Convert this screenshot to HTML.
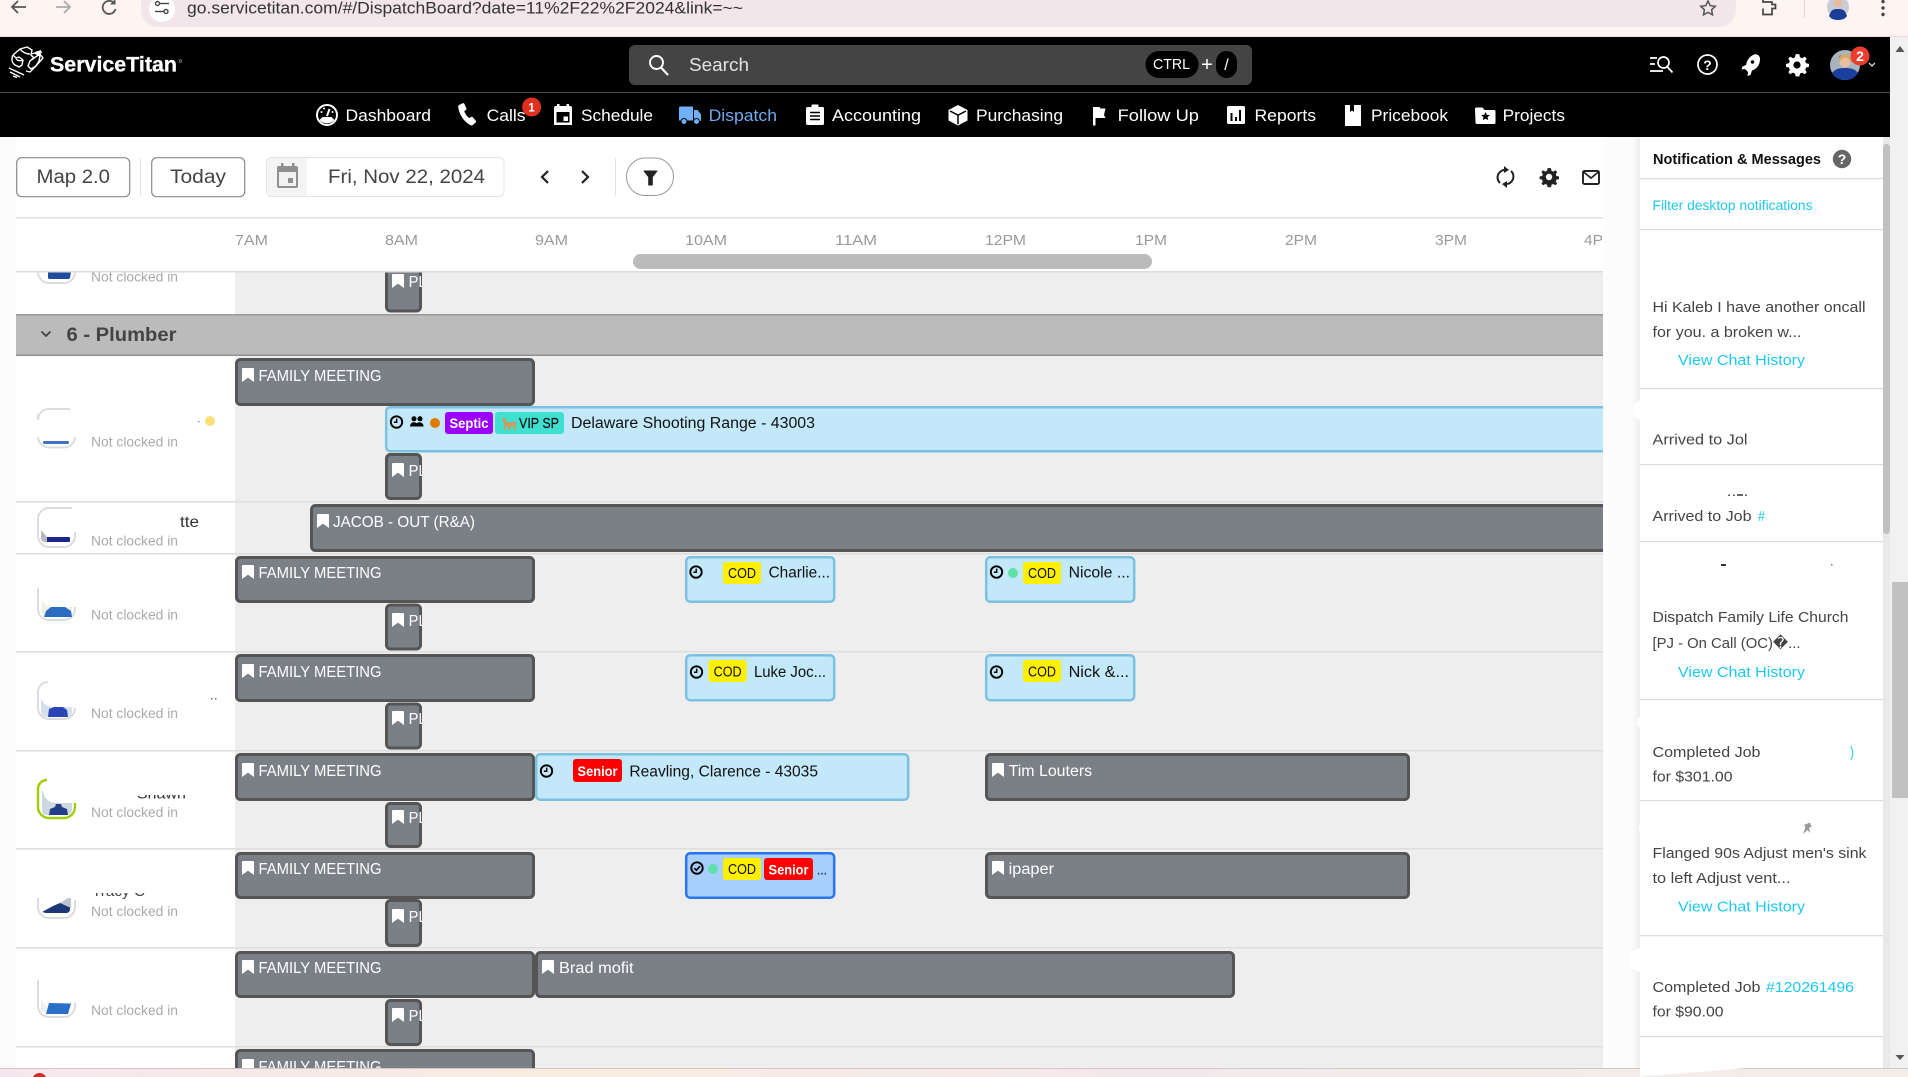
<!DOCTYPE html>
<html lang="en">
<head>
<meta charset="utf-8">
<title>ServiceTitan Dispatch Board</title>
<style>
html,body{margin:0;padding:0;background:#fff;overflow:hidden;width:1908px;height:1077px}
svg{display:block}
text{font-family:"Liberation Sans",sans-serif}
.nav{font-size:17px;fill:#fff}
.tm{font-size:15px;fill:#9a9a9a}
.bk{font-size:15.5px;fill:#fff}
.job{font-size:15.5px;fill:#111}
.nc{font-size:14px;fill:#aaa}
.pn{font-size:15px;fill:#444}
.lk{font-size:15px;fill:#1ec8ee}
.bd{font-size:14px;font-weight:bold;fill:#fff}
.cod{font-size:14.5px;fill:#111}
.tb{font-size:19px;fill:#444}
</style>
</head>
<body>
<svg width="1908" height="1077" viewBox="0 0 1908 1077" xmlns="http://www.w3.org/2000/svg">
<defs>
<linearGradient id="bot" x1="0" x2="1" y1="0" y2="0">
<stop offset="0" stop-color="#f6e7ee"/><stop offset=".3" stop-color="#f8ecdf"/><stop offset=".6" stop-color="#f5e8ec"/><stop offset="1" stop-color="#f2eee6"/>
</linearGradient>
<linearGradient id="gut" x1="0" x2="1" y1="0" y2="0">
<stop offset="0" stop-color="#fdfdfd"/><stop offset=".8" stop-color="#fbfbfb"/><stop offset="1" stop-color="#eeeeee"/>
</linearGradient>
<clipPath id="plc"><rect x="388" y="250" width="34" height="830"/></clipPath>
<clipPath id="ncc1"><rect x="85" y="437" width="100" height="12"/></clipPath>
<clipPath id="frag5"><rect x="120" y="795" width="70" height="4"/></clipPath>
<clipPath id="frag6"><rect x="88" y="893" width="60" height="7"/></clipPath>
<symbol id="bm" viewBox="0 0 12 14" overflow="visible"><path d="M1 0H11a1 1 0 0 1 1 1V14L6 9.6 0 14V1a1 1 0 0 1 1-1Z" fill="#fff"/></symbol>
<symbol id="clk" viewBox="0 0 14 14"><circle cx="7" cy="7" r="5.7" fill="none" stroke="#000" stroke-width="1.9"/><path d="M7.2 3.6V7.3H4.4" fill="none" stroke="#000" stroke-width="1.5"/></symbol>
</defs>

<!-- page -->
<rect width="1908" height="1077" fill="#fff"/>
<rect x="0" y="137" width="16" height="940" fill="#fbfbfb"/>

<!-- timeline background -->
<rect x="235" y="272" width="1368" height="800" fill="#eeeeee"/>

<!-- row dividers -->
<g fill="#dedede">
<rect x="16" y="501" width="1587" height="1.5"/>
<rect x="16" y="553" width="1587" height="1.5"/>
<rect x="16" y="651" width="1587" height="1.5"/>
<rect x="16" y="750" width="1587" height="1.5"/>
<rect x="16" y="848" width="1587" height="1.5"/>
<rect x="16" y="947" width="1587" height="1.5"/>
<rect x="16" y="1046" width="1587" height="1.5"/>
</g>

<!-- gray blocks -->
<g fill="#7a8086" stroke="#555" stroke-width="3">
<rect x="386.5" y="260" width="34" height="51" rx="4"/>
<rect x="236.5" y="359.5" width="297" height="45" rx="4"/>
<rect x="386.5" y="454.5" width="34" height="44" rx="4"/>
<rect x="311.5" y="505.5" width="1300" height="45" rx="4"/>
<rect x="236.5" y="557.5" width="297" height="44" rx="4"/>
<rect x="386.5" y="605" width="34" height="44" rx="4"/>
<rect x="236.5" y="655.5" width="297" height="45" rx="4"/>
<rect x="386.5" y="704" width="34" height="44" rx="4"/>
<rect x="236.5" y="754.5" width="297" height="45" rx="4"/>
<rect x="386.5" y="803.5" width="34" height="43" rx="4"/>
<rect x="236.5" y="853.5" width="297" height="44" rx="4"/>
<rect x="386.5" y="900.5" width="34" height="45" rx="4"/>
<rect x="236.5" y="952.5" width="297" height="44" rx="4"/>
<rect x="386.5" y="1000.5" width="34" height="44" rx="4"/>
<rect x="236.5" y="1050.5" width="297" height="44" rx="4"/>
<rect x="536.5" y="952.5" width="697" height="44" rx="4"/>
<rect x="986.5" y="754.5" width="422" height="45" rx="4"/>
<rect x="986.5" y="853.5" width="422" height="44" rx="4"/>
</g>

<!-- light-blue jobs -->
<g fill="#c2e8f9" stroke="#7cc2e0" stroke-width="2.5">
<rect x="386.2" y="407.2" width="1230" height="44" rx="4"/>
<rect x="686.2" y="557.2" width="148" height="44.5" rx="4"/>
<rect x="986.2" y="557.2" width="148" height="44.5" rx="4"/>
<rect x="686.2" y="655.2" width="148" height="45" rx="4"/>
<rect x="986.2" y="655.2" width="148" height="45" rx="4"/>
<rect x="536.2" y="754.2" width="372" height="45.5" rx="4"/>
</g>
<rect x="686.2" y="853.2" width="148" height="44.5" rx="4" fill="#a6cffe" stroke="#2a75ee" stroke-width="2.5"/>

<!-- bookmarks -->
<use href="#bm" x="242" y="368" width="12" height="14"/>
<use href="#bm" x="317" y="514" width="12" height="14"/>
<use href="#bm" x="242" y="565" width="12" height="14"/>
<use href="#bm" x="242" y="664" width="12" height="14"/>
<use href="#bm" x="242" y="763" width="12" height="14"/>
<use href="#bm" x="242" y="861" width="12" height="14"/>
<use href="#bm" x="242" y="960" width="12" height="14"/>
<use href="#bm" x="542" y="960" width="12" height="14"/>
<use href="#bm" x="992" y="763" width="12" height="14"/>
<use href="#bm" x="992" y="861" width="12" height="14"/>
<use href="#bm" x="242" y="1059" width="12" height="14"/>
<use href="#bm" x="392" y="274" width="12" height="14"/>
<use href="#bm" x="392" y="463" width="12" height="14"/>
<use href="#bm" x="392" y="613" width="12" height="14"/>
<use href="#bm" x="392" y="711" width="12" height="14"/>
<use href="#bm" x="392" y="810" width="12" height="14"/>
<use href="#bm" x="392" y="909" width="12" height="14"/>
<use href="#bm" x="392" y="1008" width="12" height="14"/>

<g clip-path="url(#plc)">
<text class="bk" x="408.6" y="287" textLength="18" lengthAdjust="spacingAndGlyphs">PL</text>
<text class="bk" x="408.6" y="476" textLength="18" lengthAdjust="spacingAndGlyphs">PL</text>
<text class="bk" x="408.6" y="626" textLength="18" lengthAdjust="spacingAndGlyphs">PL</text>
<text class="bk" x="408.6" y="724" textLength="18" lengthAdjust="spacingAndGlyphs">PL</text>
<text class="bk" x="408.6" y="823" textLength="18" lengthAdjust="spacingAndGlyphs">PL</text>
<text class="bk" x="408.6" y="922" textLength="18" lengthAdjust="spacingAndGlyphs">PL</text>
<text class="bk" x="408.6" y="1021" textLength="18" lengthAdjust="spacingAndGlyphs">PL</text>
</g>

<text class="bk" x="258.5" y="381" textLength="123" lengthAdjust="spacingAndGlyphs">FAMILY MEETING</text>
<text class="bk" x="333" y="527" textLength="142" lengthAdjust="spacingAndGlyphs">JACOB - OUT (R&amp;A)</text>
<text class="bk" x="258.5" y="578" textLength="123" lengthAdjust="spacingAndGlyphs">FAMILY MEETING</text>
<text class="bk" x="258.5" y="677" textLength="123" lengthAdjust="spacingAndGlyphs">FAMILY MEETING</text>
<text class="bk" x="258.5" y="776" textLength="123" lengthAdjust="spacingAndGlyphs">FAMILY MEETING</text>
<text class="bk" x="258.5" y="874" textLength="123" lengthAdjust="spacingAndGlyphs">FAMILY MEETING</text>
<text class="bk" x="258.5" y="973" textLength="123" lengthAdjust="spacingAndGlyphs">FAMILY MEETING</text>
<text class="bk" x="258.5" y="1072" textLength="123" lengthAdjust="spacingAndGlyphs">FAMILY MEETING</text>
<text class="bk" x="559" y="973" textLength="74.5" lengthAdjust="spacingAndGlyphs">Brad mofit</text>
<text class="bk" x="1008.6" y="776" textLength="83.5" lengthAdjust="spacingAndGlyphs">Tim Louters</text>
<text class="bk" x="1008.6" y="874" textLength="45.5" lengthAdjust="spacingAndGlyphs">ipaper</text>

<!-- Septic job contents -->
<use href="#clk" x="389.5" y="415" width="14" height="14"/>
<path d="M410 426.5c0-3 2.3-4.3 3.8-4.3 1.2 0 2 .4 2.9 1 .9-.6 1.7-1 2.9-1 1.5 0 4 1.3 4 4.3Z" fill="#000"/>
<circle cx="414" cy="418.8" r="2.5" fill="#000"/><circle cx="420" cy="418.8" r="2.5" fill="#000"/>
<circle cx="435" cy="423" r="5" fill="#e07b00"/>
<rect x="445" y="412" width="48" height="22" rx="3" fill="#9b00ff"/>
<text class="bd" x="449.5" y="428" textLength="39" lengthAdjust="spacingAndGlyphs">Septic</text>
<rect x="495" y="412" width="69" height="22" rx="3" fill="#40e0d0"/>
<path d="M503 417l2.500 1.500.8 3.500 6 .5 3-1.500 1 3-.8 2 .3 4.500h-1.500l-.5-4-3.500.2-.5 3.800h-1.500l-.3-3.800-1.500-1.500-.5 5.300h-1.400l-.4-7-1.900-3.500Z" fill="#d2985c"/>
<text class="cod" x="519" y="428" textLength="40" lengthAdjust="spacingAndGlyphs" stroke="#111" stroke-width=".2">VIP SP</text>
<text class="job" x="571" y="428" textLength="244" lengthAdjust="spacingAndGlyphs">Delaware Shooting Range - 43003</text>

<!-- Row 3 -->
<use href="#clk" x="689" y="565" width="14" height="14"/>
<rect x="723" y="562" width="38" height="22" rx="3" fill="#fff000"/>
<text class="cod" x="728" y="578" textLength="28" lengthAdjust="spacingAndGlyphs">COD</text>
<text class="job" x="768.6" y="577.500" textLength="61.400" lengthAdjust="spacingAndGlyphs">Charlie...</text>
<use href="#clk" x="989.5" y="565" width="14" height="14"/>
<circle cx="1013" cy="573" r="5" fill="#5fe0a8"/>
<rect x="1023" y="562" width="38" height="22" rx="3" fill="#fff000"/>
<text class="cod" x="1028" y="578" textLength="28" lengthAdjust="spacingAndGlyphs">COD</text>
<text class="job" x="1068.6" y="577.500" textLength="61.400" lengthAdjust="spacingAndGlyphs">Nicole ...</text>

<!-- Row 4 -->
<use href="#clk" x="689.5" y="665" width="14" height="14"/>
<rect x="708.600" y="660" width="38" height="22" rx="3" fill="#fff000"/>
<text class="cod" x="713.600" y="676.500" textLength="28" lengthAdjust="spacingAndGlyphs">COD</text>
<text class="job" x="754" y="677" textLength="72" lengthAdjust="spacingAndGlyphs">Luke Joc...</text>
<use href="#clk" x="989.5" y="665" width="14" height="14"/>
<rect x="1023" y="660" width="38" height="22" rx="3" fill="#fff000"/>
<text class="cod" x="1028" y="676.500" textLength="28" lengthAdjust="spacingAndGlyphs">COD</text>
<text class="job" x="1068.6" y="677" textLength="60.400" lengthAdjust="spacingAndGlyphs">Nick &amp;...</text>

<!-- Row 5 -->
<use href="#clk" x="539.500" y="764" width="14" height="14"/>
<rect x="573" y="759" width="49" height="23" rx="3" fill="#ff0000"/>
<text class="bd" x="577.500" y="776" textLength="40" lengthAdjust="spacingAndGlyphs">Senior</text>
<text class="job" x="629.400" y="776.500" textLength="188.600" lengthAdjust="spacingAndGlyphs">Reavling, Clarence - 43035</text>

<!-- Row 6 -->
<circle cx="697" cy="868" r="5.700" fill="none" stroke="#000" stroke-width="1.900"/>
<path d="M694.300 868.200l2 2 3.700-4" fill="none" stroke="#000" stroke-width="1.600"/>
<circle cx="713" cy="869" r="5" fill="#5fe0a8"/>
<rect x="723" y="858" width="38" height="22" rx="3" fill="#fff000"/>
<text class="cod" x="728" y="874" textLength="28" lengthAdjust="spacingAndGlyphs">COD</text>
<rect x="764" y="858" width="49" height="22" rx="3" fill="#ff0000"/>
<text class="bd" x="768.500" y="874.500" textLength="40" lengthAdjust="spacingAndGlyphs">Senior</text>
<text class="job" x="817" y="874.500" textLength="10" lengthAdjust="spacingAndGlyphs">...</text>

<!-- group header -->
<rect x="16" y="314" width="1587" height="42" fill="#bbbbbb"/>
<rect x="16" y="314" width="1587" height="1.500" fill="#9a9a9a"/>
<rect x="16" y="354.500" width="1587" height="1.500" fill="#8f8f8f"/>
<path d="M41.500 331.500l4.500 4.500 4.500-4.500" fill="none" stroke="#444" stroke-width="1.800"/>
<text x="66.500" y="341" font-size="19" font-weight="bold" fill="#444" textLength="110" lengthAdjust="spacingAndGlyphs">6 - Plumber</text>

<!-- left column: avatars (partially hidden) -->
<g fill="none" stroke="#dcdcdc" stroke-width="2">
<path d="M38 272a11 11 0 0 0 11 11H64a11 11 0 0 0 11-11"/>
<path d="M38 414V420a11 11 0 0 1 11-11H70" />
<path d="M38 437a11 11 0 0 0 11 10.500H64a11 11 0 0 0 11-10.500"/>
<path d="M72 508H49a11 11 0 0 0-11 11V536a11 11 0 0 0 11 11H64a11 11 0 0 0 11-11V532"/>
<path d="M38 588V609a11 11 0 0 0 11 11H64a11 11 0 0 0 11-11V607"/>
<path d="M48 682a10 10 0 0 0-10 10V708a11 11 0 0 0 11 11H64a11 11 0 0 0 11-11V708"/>
<path d="M38 898V907a11 11 0 0 0 11 11H64a11 11 0 0 0 11-11V900"/>
<path d="M38 980V1006a11 11 0 0 0 11 11H64a11 11 0 0 0 11-11V1003"/>
</g>
<path d="M47 780a9 9 0 0 0-9 9V807a11 11 0 0 0 11 11H64a11 11 0 0 0 11-11V803" fill="none" stroke="#a3cd06" stroke-width="2.400"/>

<!-- avatar remains -->
<path d="M48 272h23l-1 6a2 2 0 0 1-2 1H50a2 2 0 0 1-2-1Z" fill="#1f4c9e"/>
<rect x="43" y="441" width="26" height="3" rx="1" fill="#3d74c6"/>
<rect x="46" y="537" width="24" height="5" rx="1" fill="#19268a"/>
<path d="M41 530l6 7v5h-2a4 4 0 0 1-4-4Z" fill="#b9b9b9"/>
<path d="M42 597C43 603 46 606 50 607H72V612a5 5 0 0 1-5 5H47a5 5 0 0 1-5-5Z" fill="#eef1e4"/>
<path d="M44 617l2-6 5-4H65l6 4 1 6Z" fill="#2a6cc0"/>
<path d="M41 698C43 704 47 707 55 707H72V712a5 5 0 0 1-5 5H46a5 5 0 0 1-5-5Z" fill="#d5dfee"/>
<path d="M48 717l1-8 5-2H63l4 3 1 7Z" fill="#2a45b8"/>
<path d="M42 785C42 795 47 803 56 803H72V810a5 5 0 0 1-5 5H46a4 4 0 0 1-4-4Z" fill="#cdd6e3"/>
<path d="M49 815l1-6 5-2 1-3H61l1 3 5 2 1 6Z" fill="#223f86"/>
<path d="M42 912l11-6 7-3 10-5V910a4 4 0 0 1-4 3H46Z" fill="#1d3879"/>
<path d="M60 903l8-5 3 .5V908Z" fill="#bfc4cc"/>
<path d="M46 1014l3-11 22 .500-3 10.500Z" fill="#2a6fc7"/>
<path d="M41 1000v8a5 5 0 0 0 5 5l1-5Z" fill="#eef0f2"/>

<text class="nc" x="91" y="281.500" textLength="87" lengthAdjust="spacingAndGlyphs">Not clocked in</text>
<g clip-path="url(#ncc1)"><text class="nc" x="91" y="446.500" textLength="87" lengthAdjust="spacingAndGlyphs">Not clocked in</text></g>
<text class="nc" x="91" y="545.500" textLength="87" lengthAdjust="spacingAndGlyphs">Not clocked in</text>
<text class="nc" x="91" y="619.500" textLength="87" lengthAdjust="spacingAndGlyphs">Not clocked in</text>
<text class="nc" x="91" y="718" textLength="87" lengthAdjust="spacingAndGlyphs">Not clocked in</text>
<text class="nc" x="91" y="817" textLength="87" lengthAdjust="spacingAndGlyphs">Not clocked in</text>
<text class="nc" x="91" y="916" textLength="87" lengthAdjust="spacingAndGlyphs">Not clocked in</text>
<text class="nc" x="91" y="1015" textLength="87" lengthAdjust="spacingAndGlyphs">Not clocked in</text>
<text x="180" y="527" font-size="15.500" fill="#333" textLength="19" lengthAdjust="spacingAndGlyphs">tte</text>
<circle cx="210" cy="421" r="5" fill="#fbe07a"/>
<rect x="198" y="421" width="1.500" height="1.200" fill="#888"/>
<g clip-path="url(#frag5)"><text x="127" y="798.500" font-size="15" fill="#333" textLength="59" lengthAdjust="spacingAndGlyphs">- Shawn</text></g>
<g clip-path="url(#frag6)"><text x="92" y="896" font-size="15" fill="#444" textLength="53" lengthAdjust="spacingAndGlyphs">Tracy C</text></g>
<rect x="211" y="698" width="1.500" height="1.500" fill="#777"/><rect x="215" y="698" width="1.500" height="1.500" fill="#777"/>

<!-- toolbar / timeline header -->
<rect x="16" y="137" width="1587" height="135" fill="#fff"/>
<rect x="16" y="217" width="1587" height="1.500" fill="#e2e2e2"/>
<rect x="16" y="271" width="1587" height="1.500" fill="#dcdcdc"/>
<rect x="16.700" y="157.700" width="113" height="39" rx="5" fill="#fff" stroke="#8a8a8a" stroke-width="1.200"/>
<text class="tb" x="36.500" y="183" textLength="73.500" lengthAdjust="spacingAndGlyphs">Map 2.0</text>
<rect x="140" y="158" width="1" height="38" fill="#e2e2e2"/>
<rect x="151.700" y="157.700" width="93" height="39" rx="5" fill="#fff" stroke="#8a8a8a" stroke-width="1.200"/>
<text class="tb" x="170" y="183" textLength="56" lengthAdjust="spacingAndGlyphs">Today</text>
<rect x="266.500" y="157.500" width="237.500" height="39" rx="5" fill="#fff" stroke="#e4e4e4"/>
<path d="M271 158h36v38h-36a4 4 0 0 1-4-4v-30a4 4 0 0 1 4-4Z" fill="#f4f4f4"/>
<rect x="277" y="166" width="21" height="22" rx="2" fill="#8f8f8f"/>
<rect x="279" y="172" width="17" height="14" fill="#f1f1f1"/>
<rect x="288" y="178" width="5" height="5" fill="#8f8f8f"/>
<rect x="281" y="163" width="2.500" height="4" fill="#8f8f8f"/><rect x="292" y="163" width="2.500" height="4" fill="#8f8f8f"/>
<text class="tb" x="328" y="183" textLength="157" lengthAdjust="spacingAndGlyphs">Fri, Nov 22, 2024</text>
<path d="M548 171l-6 6 6 6" fill="none" stroke="#222" stroke-width="2.200"/>
<path d="M582 171l6 6-6 6" fill="none" stroke="#222" stroke-width="2.200"/>
<rect x="615" y="158" width="1" height="38" fill="#e2e2e2"/>
<rect x="626.500" y="158" width="47" height="37.500" rx="18.700" fill="#fff" stroke="#999"/>
<path d="M644 171h13l-4.700 6v8h-3.600v-8Z" fill="#222" stroke="#222" stroke-width="1" stroke-linejoin="round"/>

<!-- toolbar right icons -->
<g fill="none" stroke="#222" stroke-width="2">
<path d="M1500 183a7.500 7.500 0 0 1 6-13"/><path d="M1511 171a7.500 7.500 0 0 1-6 13"/>
</g>
<path d="M1504 166l5 4-5 3Z M1507 188l-5-4 5-3Z" fill="#222"/>
<path d="M1549 168l2 .3.500 2.500 1.800.8 2.200-1.300 1.600 1.700-1.300 2.200.7 1.800 2.500.5v2.600l-2.500.5-.7 1.800 1.300 2.200-1.600 1.700-2.200-1.300-1.800.8-.5 2.500h-3.400l-.5-2.500-1.800-.8-2.200 1.300-1.600-1.700 1.300-2.200-.7-1.800-2.500-.5v-2.600l2.500-.5.7-1.800-1.300-2.200 1.600-1.700 2.200 1.300 1.800-.8.500-2.500Z" fill="#222"/>
<circle cx="1549" cy="177" r="3.200" fill="#fff"/>
<rect x="1583" y="171" width="16" height="13" rx="1.500" fill="none" stroke="#222" stroke-width="1.900"/>
<path d="M1583.500 172l7.500 6 7.500-6" fill="none" stroke="#222" stroke-width="1.700"/>

<!-- time labels -->
<text class="tm" x="235" y="245" textLength="33" lengthAdjust="spacingAndGlyphs">7AM</text>
<text class="tm" x="385" y="245" textLength="33" lengthAdjust="spacingAndGlyphs">8AM</text>
<text class="tm" x="535" y="245" textLength="33" lengthAdjust="spacingAndGlyphs">9AM</text>
<text class="tm" x="685" y="245" textLength="42" lengthAdjust="spacingAndGlyphs">10AM</text>
<text class="tm" x="835" y="245" textLength="42" lengthAdjust="spacingAndGlyphs">11AM</text>
<text class="tm" x="985" y="245" textLength="41" lengthAdjust="spacingAndGlyphs">12PM</text>
<text class="tm" x="1135" y="245" textLength="32" lengthAdjust="spacingAndGlyphs">1PM</text>
<text class="tm" x="1285" y="245" textLength="32" lengthAdjust="spacingAndGlyphs">2PM</text>
<text class="tm" x="1435" y="245" textLength="32" lengthAdjust="spacingAndGlyphs">3PM</text>
<text class="tm" x="1584" y="245" textLength="19" lengthAdjust="spacingAndGlyphs">4P</text>
<rect x="633" y="254" width="519" height="15" rx="7.500" fill="#bbbbbb"/>

<!-- gutter + panel -->
<rect x="1603" y="137" width="37" height="935" fill="url(#gut)"/>
<rect x="1640" y="137" width="243" height="935" fill="#fff"/>
<rect x="1883" y="137" width="7" height="935" fill="#e9e9e9"/>
<rect x="1883" y="144" width="7" height="390" rx="3.500" fill="#c0c0c0"/>
<rect x="1890" y="37" width="18" height="1040" fill="#f1f1f1"/>
<rect x="1892" y="582" width="16" height="216" fill="#c1c1c1"/>
<path d="M1895.500 52l4.500-6 4.500 6Z" fill="#555"/>
<path d="M1895.500 1055h9l-4.500 5Z" fill="#555"/>

<circle cx="1644" cy="410" r="11" fill="#fff"/>
<circle cx="1644" cy="722" r="7" fill="#fff"/>
<circle cx="1648" cy="828" r="9" fill="#fff"/>
<ellipse cx="1650" cy="960" rx="22" ry="14" fill="#fff"/>

<g fill="#dedede">
<rect x="1640" y="178" width="243" height="1.300"/>
<rect x="1640" y="229" width="243" height="1.300"/>
<rect x="1640" y="388" width="243" height="1.300"/>
<rect x="1640" y="464" width="243" height="1.300"/>
<rect x="1640" y="541" width="243" height="1.300"/>
<rect x="1640" y="699" width="243" height="1.300"/>
<rect x="1640" y="800" width="243" height="1.300"/>
<rect x="1640" y="935" width="243" height="1.300"/>
<rect x="1640" y="1036" width="243" height="1.300"/>
</g>
<text x="1653" y="164" font-size="14.500" font-weight="bold" fill="#111" textLength="168" lengthAdjust="spacingAndGlyphs">Notification &amp; Messages</text>
<circle cx="1842" cy="159" r="9.200" fill="#666"/>
<text x="1842" y="164" font-size="14" font-weight="bold" fill="#fff" text-anchor="middle">?</text>
<text x="1652.500" y="210" font-size="13.500" fill="#1ec8ee" textLength="160" lengthAdjust="spacingAndGlyphs">Filter desktop notifications</text>

<text class="pn" x="1652.500" y="312" textLength="213" lengthAdjust="spacingAndGlyphs">Hi Kaleb I have another oncall</text>
<text class="pn" x="1652.500" y="337" textLength="149" lengthAdjust="spacingAndGlyphs">for you. a broken w...</text>
<text class="lk" x="1678" y="365" textLength="127" lengthAdjust="spacingAndGlyphs">View Chat History</text>
<text class="pn" x="1652.500" y="444.500" textLength="95" lengthAdjust="spacingAndGlyphs">Arrived to Jol</text>
<g fill="#666"><rect x="1728" y="494.500" width="2" height="1.500"/><rect x="1733" y="494.500" width="2" height="1.500"/><rect x="1737" y="494" width="6" height="2"/><rect x="1745" y="494.500" width="2" height="1.500"/></g>
<text class="pn" x="1652.500" y="521" textLength="99" lengthAdjust="spacingAndGlyphs">Arrived to Job</text>
<text class="lk" x="1758" y="521" font-size="14" textLength="7" lengthAdjust="spacingAndGlyphs">#</text>
<rect x="1721" y="564" width="5" height="2" fill="#333"/>
<rect x="1831" y="564" width="1.500" height="1.500" fill="#5588bb"/>
<text class="pn" x="1652.500" y="622" textLength="196" lengthAdjust="spacingAndGlyphs">Dispatch Family Life Church</text>
<text class="pn" x="1652.500" y="648" textLength="148" lengthAdjust="spacingAndGlyphs">[PJ - On Call (OC)&#xFFFD;...</text>
<text class="lk" x="1678" y="677" textLength="127" lengthAdjust="spacingAndGlyphs">View Chat History</text>
<text class="pn" x="1652.500" y="757" textLength="108" lengthAdjust="spacingAndGlyphs">Completed Job</text>
<text class="lk" x="1850" y="757" textLength="4" lengthAdjust="spacingAndGlyphs">)</text>
<text class="pn" x="1652.500" y="781.500" textLength="80" lengthAdjust="spacingAndGlyphs">for $301.00</text>
<path d="M1803 834l2.500-7-1.500-2 6-2.500.5 2 1.500 1.500-3 2 1.500 5-3-3Z" fill="#999"/>
<text class="pn" x="1652.500" y="858" textLength="214" lengthAdjust="spacingAndGlyphs">Flanged 90s Adjust men's sink</text>
<text class="pn" x="1652.500" y="883" textLength="138" lengthAdjust="spacingAndGlyphs">to left Adjust vent...</text>
<text class="lk" x="1678" y="911.500" textLength="127" lengthAdjust="spacingAndGlyphs">View Chat History</text>
<text class="pn" x="1652.500" y="992" textLength="108" lengthAdjust="spacingAndGlyphs">Completed Job</text>
<text class="lk" x="1766" y="992" textLength="88" lengthAdjust="spacingAndGlyphs">#120261496</text>
<text class="pn" x="1652.500" y="1016.500" textLength="71" lengthAdjust="spacingAndGlyphs">for $90.00</text>

<!-- bottom strip -->
<rect x="0" y="1068" width="1908" height="9" fill="url(#bot)"/>
<rect x="0" y="1068" width="1908" height="1" fill="#cfc8c8"/>
<circle cx="39.500" cy="1080" r="7" fill="#d62b25"/>
<path d="M1640 1068h105c-30 3-70 6-100 8l-5 1Z" fill="#fff"/>

<!-- browser bar -->
<rect x="0" y="0" width="1908" height="37" fill="#fff4f2"/>
<rect x="0" y="36" width="1908" height="1" fill="#f7d9d7"/>
<path d="M141 0h1595v10a17 17 0 0 1-17 17H158a17 17 0 0 1-17-17Z" fill="#f2e6ea"/>
<path d="M26 7H12M18 1l-6 6 6 6" fill="none" stroke="#555" stroke-width="1.800"/>
<path d="M56 7h14M64 1l6 6-6 6" fill="none" stroke="#aaa" stroke-width="1.800"/>
<path d="M114 3a6.500 6.500 0 1 0 1.500 6" fill="none" stroke="#555" stroke-width="1.800"/><path d="M115.500 -1v5.500h-5.500Z" fill="#555"/>
<circle cx="162" cy="9" r="13" fill="#fff"/>
<g fill="none" stroke="#444" stroke-width="1.400"><circle cx="157.500" cy="3.500" r="2"/><path d="M160 3.500h9"/><circle cx="166" cy="11.500" r="2"/><path d="M155 11.500h8.500"/></g>
<text x="187" y="13.500" font-size="16.500" fill="#333" textLength="556" lengthAdjust="spacingAndGlyphs">go.servicetitan.com/#/DispatchBoard?date=11%2F22%2F2024&amp;link=~~</text>
<path d="M1708 1l2.200 4.600 5 .7-3.600 3.500.9 5-4.500-2.400-4.500 2.400.9-5-3.600-3.500 5-.7Z" fill="none" stroke="#555" stroke-width="1.500"/>
<path d="M1763 0v2h9v2.500h3.500v4H1772v6h-9V8.500" fill="none" stroke="#444" stroke-width="1.700"/>
<rect x="1804" y="0" width="1" height="18" fill="#e5d5d5"/>
<circle cx="1838" cy="7" r="11" fill="#c8ccd4"/>
<path d="M1829 16c2-6 4-7 9-7s7 1 9 7c-2 3-5 4-9 4s-7-1-9-4Z" fill="#1a3e9a"/>
<circle cx="1838" cy="3" r="4" fill="#e6b89c"/>
<circle cx="1883" cy="1.500" r="1.700" fill="#444"/><circle cx="1883" cy="8" r="1.700" fill="#444"/><circle cx="1883" cy="14.500" r="1.700" fill="#444"/>

<!-- black header -->
<rect x="0" y="37" width="1890" height="100" fill="#000"/>
<rect x="0" y="92" width="1890" height="1" fill="#4a4a4a"/>

<!-- logo -->
<g fill="none" stroke="#fff" stroke-width="1.400" stroke-linejoin="round">
<path d="M13 55l7-6 7-2 5 3-1 5 3 3-4 3-2 5 3 3 5-3 3-5 1-5-5-3-4 1"/>
<path d="M13 55c-2 4-1 8 2 10l4 2 3-2 1-5-4-3-3 1-3-3"/>
<path d="M20 49c2 3 6 5 10 5M16 59c2 2 5 2 7 1"/>
<path d="M31 60l9-6 3 4-8 9-5 5-4-1"/>
<path d="M9 68l15 7M10 72l10 5M13 76l4 1.500"/>
</g>
<path d="M35 52l6-2 1 3-5 2Z" fill="#fff"/>
<text x="50" y="71.500" font-size="21" font-weight="bold" fill="#fff" stroke="#fff" stroke-width=".3" textLength="127" lengthAdjust="spacingAndGlyphs">ServiceTitan</text>
<circle cx="180.500" cy="61" r="1.300" fill="none" stroke="#aaa" stroke-width=".6"/>

<!-- search -->
<rect x="629" y="45" width="623" height="40" rx="6" fill="#444"/>
<circle cx="656.500" cy="62.500" r="6.500" fill="none" stroke="#fff" stroke-width="1.900"/>
<path d="M661 67.500l7 7.500" stroke="#fff" stroke-width="2.200" fill="none"/>
<text x="689" y="71" font-size="18" fill="#e3e3e3" textLength="60" lengthAdjust="spacingAndGlyphs">Search</text>
<rect x="1145.500" y="51" width="53" height="27" rx="13.500" fill="#000"/>
<text x="1153" y="69" font-size="14.500" fill="#fff" textLength="37" lengthAdjust="spacingAndGlyphs">CTRL</text>
<text x="1207" y="71" font-size="20" fill="#fff" text-anchor="middle">+</text>
<rect x="1216" y="51" width="21" height="27" rx="10.500" fill="#000"/>
<text x="1226.500" y="70" font-size="16" fill="#fff" text-anchor="middle">/</text>

<!-- header right icons -->
<g fill="none" stroke="#fff" stroke-width="1.700">
<path d="M1650 58h7M1650 64h5M1650 71h13"/>
<circle cx="1663.500" cy="62.500" r="5.500"/><path d="M1667.500 67l5 5.500"/>
<circle cx="1707.500" cy="64.500" r="9.500"/>
</g>
<text x="1707.500" y="70" font-size="14" font-weight="bold" fill="#fff" text-anchor="middle">?</text>
<path d="M1756 54c-5 1-9 5-10 11l-3.500 1.500-1 3 3.500-.5 3 3-.5 4 3-1 1.500-4.500c4.500-1.500 7.500-5 8-10.500.2-2-.5-5.500-4-5.500Z" fill="#fff"/>
<circle cx="1752.500" cy="62" r="1.700" fill="#000"/>
<path d="M1797 54l2.400.4.600 2.800 2.200 1 2.500-1.600 2 2-1.500 2.500.9 2.200 2.900.6v3l-2.900.6-.9 2.200 1.500 2.500-2 2-2.500-1.600-2.200 1-.6 2.800h-3.800l-.6-2.800-2.200-1-2.500 1.600-2-2 1.500-2.500-.9-2.200-2.900-.6v-3l2.900-.6.900-2.200-1.500-2.500 2-2 2.500 1.600 2.200-1 .6-2.800Z" fill="#fff"/>
<circle cx="1797" cy="65" r="3.600" fill="#000"/>
<circle cx="1845" cy="65" r="15" fill="#a9b3bd"/>
<circle cx="1841" cy="57" r="2" fill="#7f8a94"/><circle cx="1851" cy="60" r="2" fill="#8d97a0"/>
<path d="M1832 73c3-4 7-5 13-5s10 1 13 5c-3 5-7 7-13 7s-10-2-13-7Z" fill="#1b3f9c"/>
<circle cx="1845" cy="62" r="5.500" fill="#e8bfa2"/>
<path d="M1839 63c-1-6 3-9 6-9s7 3 6 9c-2-4-3-5-6-5s-4 1-6 5Z" fill="#d9a866"/>
<ellipse cx="1860" cy="56" rx="9.500" ry="9.500" fill="#ee3d2c"/>
<text x="1860" y="61" font-size="14" font-weight="bold" fill="#fff" text-anchor="middle">2</text>
<path d="M1869 63l3 3 3-3" fill="none" stroke="#ddd" stroke-width="1.300"/>

<!-- nav -->
<circle cx="327" cy="115" r="10" fill="#000" stroke="#fff" stroke-width="2"/>
<path d="M319.500 120a10 10 0 0 0 15 0l-3-3h-9Z" fill="#fff"/>
<path d="M327 116l2.500-7" stroke="#fff" stroke-width="2" fill="none"/>
<circle cx="321.500" cy="112" r="1" fill="#fff"/><circle cx="324" cy="108.500" r="1" fill="#fff"/><circle cx="332.500" cy="112" r="1" fill="#fff"/>
<text class="nav" x="345.500" y="121" textLength="85.500" lengthAdjust="spacingAndGlyphs">Dashboard</text>

<path d="M459 105l3.700-1.800c.7-.3 1.400 0 1.700.7l2 4.500c.2.600.1 1.200-.5 1.600l-1.700 1.200c1 2.600 2.700 5 5 6.800l2-1.100c.5-.3 1.200-.2 1.600.3l3 3.600c.4.500.4 1.300-.1 1.700l-2.600 2.300c-.7.600-1.700.8-2.600.4-6.700-3.400-11.500-10.900-12.300-18.300-.1-.8.200-1.500.8-1.900Z" fill="#fff"/>
<text class="nav" x="486.600" y="121" textLength="39" lengthAdjust="spacingAndGlyphs">Calls</text>
<circle cx="531.600" cy="107" r="9.500" fill="#e1301f"/>
<text x="531.600" y="111.500" font-size="11.500" font-weight="bold" fill="#fff" text-anchor="middle">1</text>

<path d="M554 108a2 2 0 0 1 2-2h14a2 2 0 0 1 2 2v17h-18Z" fill="#fff"/>
<rect x="557" y="104" width="2.500" height="4" fill="#fff"/><rect x="566.500" y="104" width="2.500" height="4" fill="#fff"/>
<rect x="556.500" y="112" width="13" height="10.500" fill="#000"/>
<rect x="563.500" y="116.500" width="4.500" height="4.500" fill="#fff"/>
<text class="nav" x="581" y="121" textLength="72" lengthAdjust="spacingAndGlyphs">Schedule</text>

<path d="M679 108a1.500 1.500 0 0 1 1.500-1.500h12.500v14h-14Z M694 110h3.500l3.500 4.500v6.500h-7Z" fill="#6fb0f7"/>
<circle cx="684" cy="121.500" r="3" fill="#6fb0f7" stroke="#000"/><circle cx="696.500" cy="121.500" r="3" fill="#6fb0f7" stroke="#000"/>
<text class="nav" x="708.600" y="121" textLength="68.400" lengthAdjust="spacingAndGlyphs" style="fill:#6fa9ee">Dispatch</text>

<rect x="806" y="107" width="18" height="18" rx="1.500" fill="#fff"/>
<rect x="811.500" y="104.500" width="7" height="4.500" rx="1" fill="#fff"/>
<path d="M810 112.500h10M810 116h10M810 119.500h10" stroke="#000" stroke-width="1.500"/>
<text class="nav" x="832" y="121" textLength="89" lengthAdjust="spacingAndGlyphs">Accounting</text>

<path d="M958 105l9.500 5v10.500l-9.500 5-9.500-5V110Z" fill="#fff"/>
<path d="M950 111l8 4.200 8-4.200M958 115.200v9" fill="none" stroke="#000" stroke-width="1.500"/>
<text class="nav" x="976" y="121" textLength="87" lengthAdjust="spacingAndGlyphs">Purchasing</text>

<path d="M1093 107v18.500h2.500V118h10l-1.500-3 1.500-6.500h-5l-1-1.500Z" fill="#fff"/>
<text class="nav" x="1117.600" y="121" textLength="81.400" lengthAdjust="spacingAndGlyphs">Follow Up</text>

<rect x="1227" y="106" width="18" height="18" rx="1.500" fill="#fff"/>
<path d="M1231.500 113v8M1236 117v4M1240 110v11" stroke="#000" stroke-width="2"/>
<text class="nav" x="1254.500" y="121" textLength="61.500" lengthAdjust="spacingAndGlyphs">Reports</text>

<path d="M1345 105h16v21h-16Z" fill="#fff"/>
<path d="M1350 105h4v7l-2-1.500-2 1.500Z" fill="#000"/>
<text class="nav" x="1371" y="121" textLength="77" lengthAdjust="spacingAndGlyphs">Pricebook</text>

<path d="M1475 109a1.500 1.500 0 0 1 1.500-1.500h6l2 2.500h9.500a1.500 1.500 0 0 1 1.500 1.500v11a1.500 1.500 0 0 1-1.500 1.500h-17a1.500 1.500 0 0 1-1.500-1.500Z" fill="#fff"/>
<path d="M1485.500 112l1.300 2.800 3 .3-2.200 2 .6 3-2.700-1.500-2.700 1.500.6-3-2.200-2 3-.3Z" fill="#000"/>
<text class="nav" x="1502.600" y="121" textLength="62.400" lengthAdjust="spacingAndGlyphs">Projects</text>
</svg>
</body>
</html>
